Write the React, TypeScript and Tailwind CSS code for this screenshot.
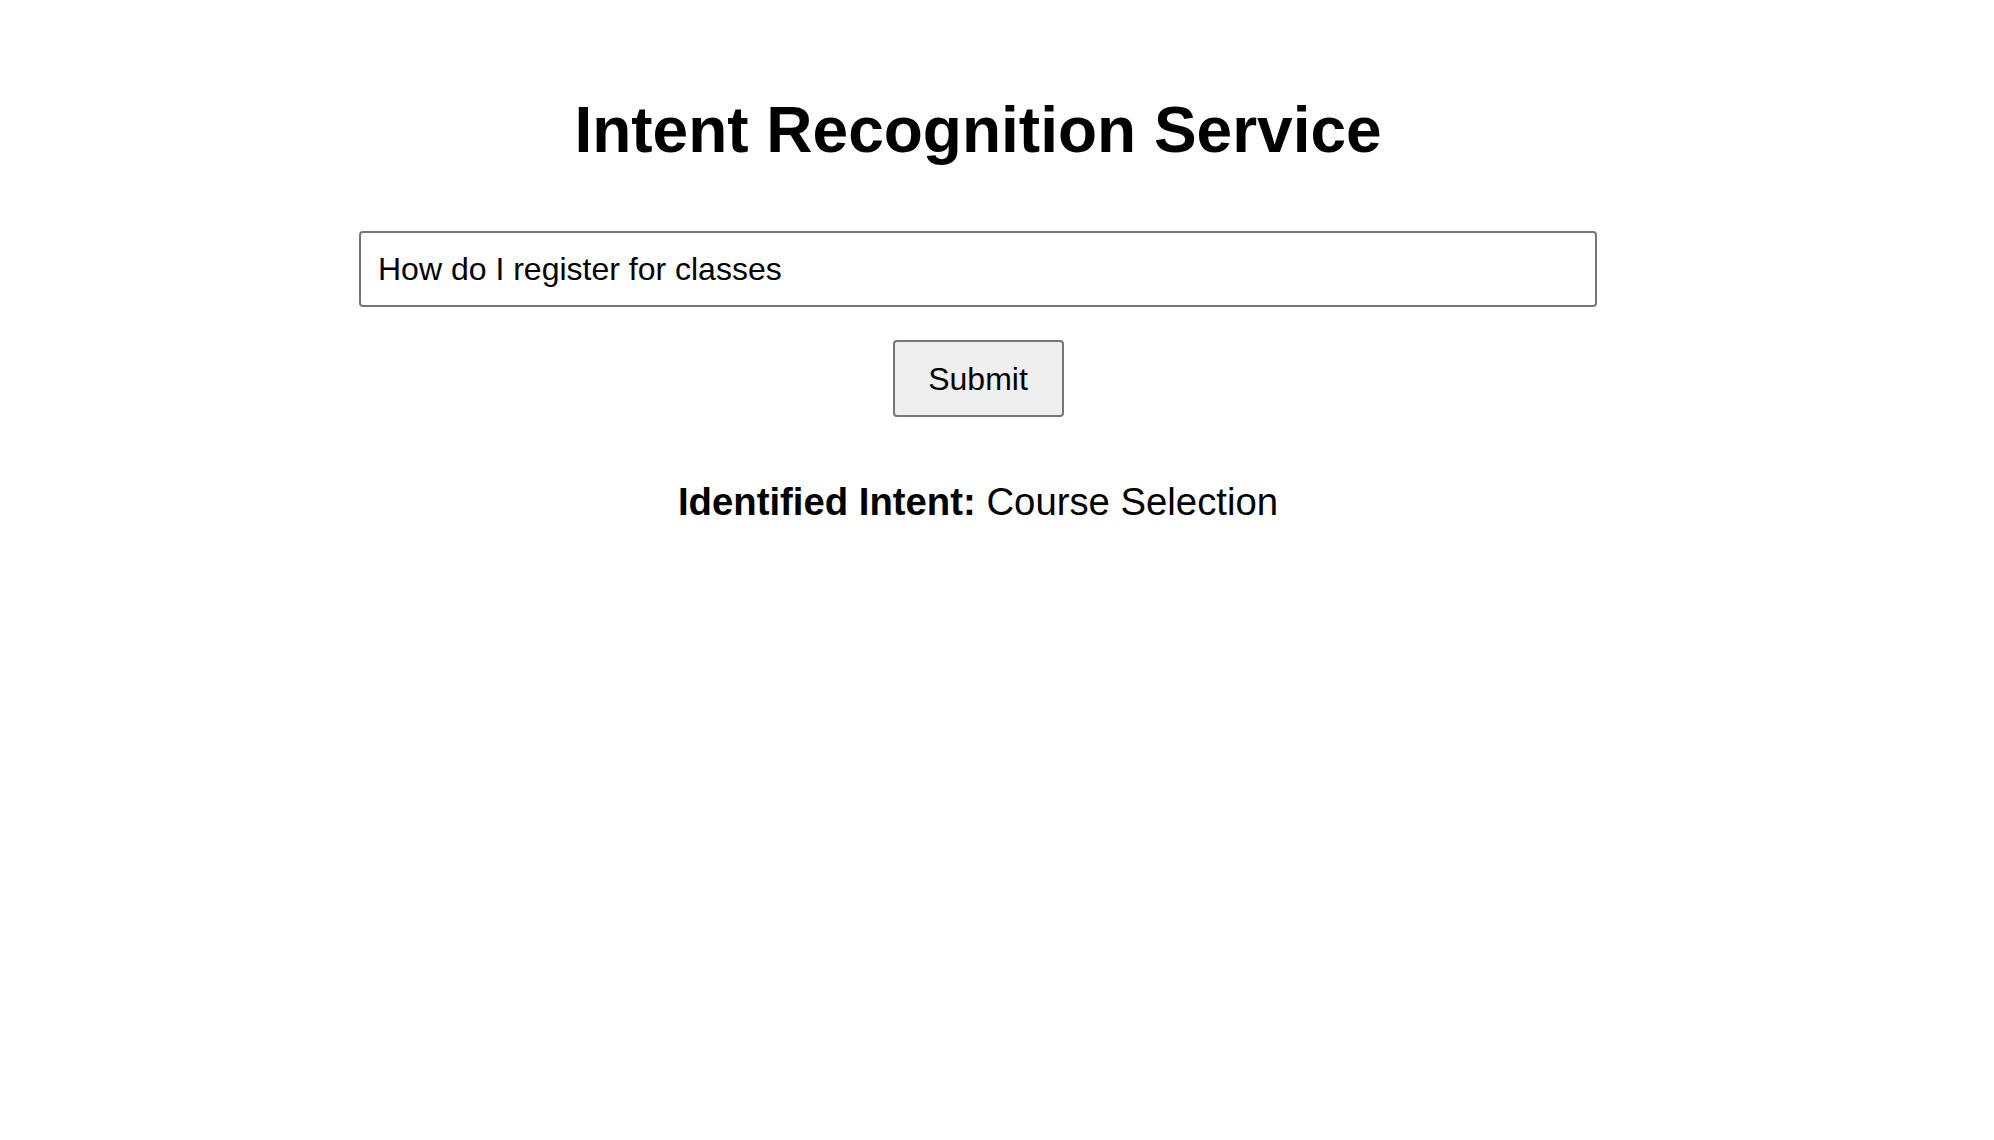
import React, { useState } from "react";

export default function App() {
  const [text, setText] = useState("How do I register for classes");
  return (
    <div className="min-h-[1140px] w-full bg-white" style={{ fontFamily: '"Liberation Sans", Arial, sans-serif' }}>
      <div className="flex w-[1956px] flex-col items-center pt-[93px] text-black">
        <h1 className="text-[64px] font-bold leading-[74px]">Intent Recognition Service</h1>
        <input
          value={text}
          onChange={(e) => setText(e.target.value)}
          className="mt-[64px] h-[76px] w-[1238px] rounded-[4px] border-2 border-[#767676] bg-white px-[17px] text-[32px] text-black outline-none"
        />
        <button className="mt-[33px] h-[77px] w-[171px] rounded-[4px] border-2 border-[#767676] bg-[#efefef] text-[32px] text-black">
          Submit
        </button>
        <p className="mt-[63px] text-[38.3px] leading-[44px]">
          <span className="font-bold">Identified Intent:</span> Course Selection
        </p>
      </div>
    </div>
  );
}
